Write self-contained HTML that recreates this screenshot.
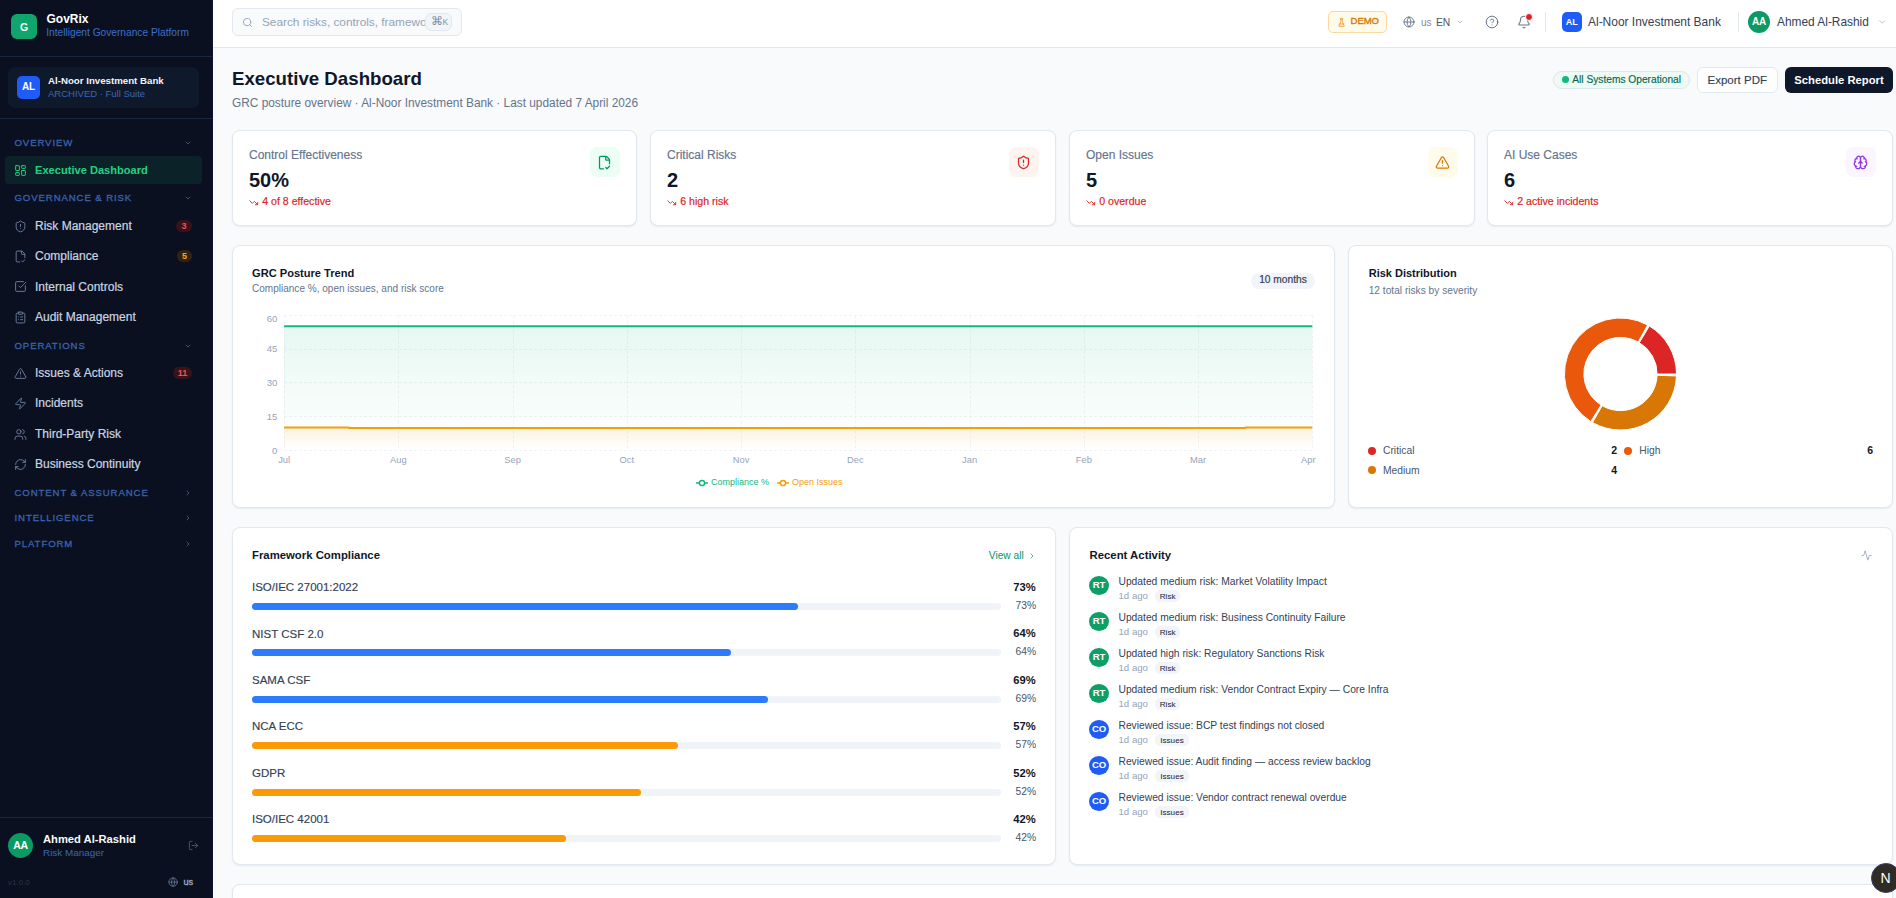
<!DOCTYPE html><html><head><meta charset="utf-8"><style>
*{box-sizing:border-box;margin:0;padding:0}
html,body{width:1896px;height:898px;overflow:hidden;background:#f8fafc;font-family:"Liberation Sans",sans-serif;color:#0f172a}
.a{position:absolute}
.t{position:absolute;white-space:nowrap;line-height:0}
svg{display:block}
.ic{fill:none;stroke:currentColor;stroke-linecap:round;stroke-linejoin:round}
.card{position:absolute;background:#fff;border:1px solid #e2e8f0;border-radius:8px;box-shadow:0 1px 2px rgba(15,23,42,.07)}
.pill{position:absolute;display:flex;align-items:center;justify-content:center;white-space:nowrap}
</style></head><body><div class="a" style="left:0;top:0;width:213px;height:898px;background:#0a1020;border-right:1px solid #0c1630"></div>
<div class="pill" style="left:11px;top:13.5px;width:26px;height:25.5px;border-radius:6px;background:#10a56d;color:#fff;font-size:10.5px;font-weight:700;padding-top:1.5px">G</div>
<div class="t" style="left:46.5px;top:19px;font-size:12px;color:#ffffff;font-weight:700;">GovRix</div>
<div class="t" style="left:46.2px;top:33px;font-size:10.2px;color:#3f6fc9;font-weight:400;">Intelligent Governance Platform</div>
<div class="a" style="left:0;top:56px;width:212px;height:1px;background:#1a2743"></div>
<div class="a" style="left:8px;top:67px;width:191px;height:41px;border-radius:7px;background:#0e192c"></div>
<div class="pill" style="left:17px;top:76px;width:23px;height:23px;border-radius:5px;background:#1f5cf7;color:#fff;font-size:10px;font-weight:700;padding-bottom:1.5px;letter-spacing:-0.2px">AL</div>
<div class="t" style="left:48px;top:81px;font-size:9.7px;color:#f1f5f9;font-weight:700;">Al-Noor Investment Bank</div>
<div class="t" style="left:48px;top:94px;font-size:9.5px;color:#3f66b0;font-weight:400;">ARCHIVED · Full Suite</div>
<div class="a" style="left:0;top:118px;width:212px;height:1px;background:#1a2743"></div>
<div class="t" style="left:14.5px;top:143px;font-size:9.6px;font-weight:400;letter-spacing:0.9px;color:#3b63ad;-webkit-text-stroke:0.3px #3b63ad">OVERVIEW</div>
<div class="a" style="left:183.8px;top:138.9px;width:8px;height:8px"><svg width="8" height="8" viewBox="0 0 24 24" class="ic" style="color:#56688c;stroke-width:2.2" ><path d="m6 9 6 6 6-6"/></svg></div>
<div class="a" style="left:5px;top:156px;width:197px;height:28px;border-radius:4px;background:#0b2328"></div>
<div class="a" style="left:14.0px;top:164.0px;width:13px;height:13px"><svg width="13" height="13" viewBox="0 0 24 24" class="ic" style="color:#24d183;stroke-width:1.8" ><rect width="7" height="9" x="3" y="3" rx="1"/><rect width="7" height="5" x="14" y="3" rx="1"/><rect width="7" height="9" x="14" y="12" rx="1"/><rect width="7" height="5" x="3" y="16" rx="1"/></svg></div>
<div class="t" style="left:35px;top:170px;font-size:11.1px;color:#24d183;font-weight:700;">Executive Dashboard</div>
<div class="t" style="left:14.5px;top:198px;font-size:9.6px;font-weight:400;letter-spacing:0.9px;color:#3b63ad;-webkit-text-stroke:0.3px #3b63ad">GOVERNANCE &amp; RISK</div>
<div class="a" style="left:183.8px;top:193.9px;width:8px;height:8px"><svg width="8" height="8" viewBox="0 0 24 24" class="ic" style="color:#56688c;stroke-width:2.2" ><path d="m6 9 6 6 6-6"/></svg></div>
<div class="a" style="left:14.0px;top:219.7px;width:13px;height:13px"><svg width="13" height="13" viewBox="0 0 24 24" class="ic" style="color:#7688a8;stroke-width:1.6" ><path d="M20 13c0 5-3.5 7.5-7.66 8.95a1 1 0 0 1-.67-.01C7.5 20.5 4 18 4 13V6a1 1 0 0 1 1-1c2 0 4.5-1.2 6.24-2.72a1.17 1.17 0 0 1 1.52 0C14.51 3.81 17 5 19 5a1 1 0 0 1 1 1z"/><path d="M12 8v4"/><path d="M12 16h.01"/></svg></div>
<div class="t" style="left:35px;top:226px;font-size:12px;color:#cbd5e1;font-weight:400;-webkit-text-stroke:0.2px #cbd5e1">Risk Management</div>
<div class="pill" style="left:176px;top:220.2px;width:16px;height:12px;border-radius:6px;background:#3a1219;color:#f05252;font-size:9px;font-weight:700">3</div>
<div class="a" style="left:14.0px;top:249.5px;width:13px;height:13px"><svg width="13" height="13" viewBox="0 0 24 24" class="ic" style="color:#7688a8;stroke-width:1.6" ><path d="M10.5 22H6a2 2 0 0 1-2-2V4a2 2 0 0 1 2-2h8a2.4 2.4 0 0 1 1.706.706l3.588 3.588A2.4 2.4 0 0 1 20 8v6"/><path d="M14 2v5a1 1 0 0 0 1 1h5"/><path d="m14 20 2 2 4-4"/></svg></div>
<div class="t" style="left:35px;top:256px;font-size:12px;color:#cbd5e1;font-weight:400;-webkit-text-stroke:0.2px #cbd5e1">Compliance</div>
<div class="pill" style="left:177px;top:250px;width:15px;height:12px;border-radius:6px;background:#33220f;color:#f5a524;font-size:9px;font-weight:700">5</div>
<div class="a" style="left:14.0px;top:280.4px;width:13px;height:13px"><svg width="13" height="13" viewBox="0 0 24 24" class="ic" style="color:#7688a8;stroke-width:1.6" ><path d="M21 10.5V19a2 2 0 0 1-2 2H5a2 2 0 0 1-2-2V5a2 2 0 0 1 2-2h12.5"/><path d="m9 11 3 3L22 4"/></svg></div>
<div class="t" style="left:35px;top:287px;font-size:12px;color:#cbd5e1;font-weight:400;-webkit-text-stroke:0.2px #cbd5e1">Internal Controls</div>
<div class="a" style="left:14.0px;top:310.6px;width:13px;height:13px"><svg width="13" height="13" viewBox="0 0 24 24" class="ic" style="color:#7688a8;stroke-width:1.6" ><rect width="8" height="4" x="8" y="2" rx="1" ry="1"/><path d="M16 4h2a2 2 0 0 1 2 2v14a2 2 0 0 1-2 2H6a2 2 0 0 1-2-2V6a2 2 0 0 1 2-2h2"/><path d="M12 11h4"/><path d="M12 16h4"/><path d="M8 11h.01"/><path d="M8 16h.01"/></svg></div>
<div class="t" style="left:35px;top:317px;font-size:12px;color:#cbd5e1;font-weight:400;-webkit-text-stroke:0.2px #cbd5e1">Audit Management</div>
<div class="t" style="left:14.5px;top:346px;font-size:9.6px;font-weight:400;letter-spacing:0.9px;color:#3b63ad;-webkit-text-stroke:0.3px #3b63ad">OPERATIONS</div>
<div class="a" style="left:183.8px;top:342.1px;width:8px;height:8px"><svg width="8" height="8" viewBox="0 0 24 24" class="ic" style="color:#56688c;stroke-width:2.2" ><path d="m6 9 6 6 6-6"/></svg></div>
<div class="a" style="left:14.0px;top:366.5px;width:13px;height:13px"><svg width="13" height="13" viewBox="0 0 24 24" class="ic" style="color:#7688a8;stroke-width:1.6" ><path d="m21.73 18-8-14a2 2 0 0 0-3.48 0l-8 14A2 2 0 0 0 4 21h16a2 2 0 0 0 1.73-3"/><path d="M12 9v4"/><path d="M12 17h.01"/></svg></div>
<div class="t" style="left:35px;top:373px;font-size:12px;color:#cbd5e1;font-weight:400;-webkit-text-stroke:0.2px #cbd5e1">Issues &amp; Actions</div>
<div class="pill" style="left:173px;top:367px;width:19px;height:12px;border-radius:6px;background:#3a1219;color:#f05252;font-size:9px;font-weight:700">11</div>
<div class="a" style="left:14.0px;top:396.7px;width:13px;height:13px"><svg width="13" height="13" viewBox="0 0 24 24" class="ic" style="color:#7688a8;stroke-width:1.6" ><path d="M4 14a1 1 0 0 1-.78-1.63l9.9-10.2a.5.5 0 0 1 .86.46l-1.92 6.02A1 1 0 0 0 13 10h7a1 1 0 0 1 .78 1.63l-9.9 10.2a.5.5 0 0 1-.86-.46l1.92-6.02A1 1 0 0 0 11 14z"/></svg></div>
<div class="t" style="left:35px;top:403px;font-size:12px;color:#cbd5e1;font-weight:400;-webkit-text-stroke:0.2px #cbd5e1">Incidents</div>
<div class="a" style="left:14.0px;top:427.5px;width:13px;height:13px"><svg width="13" height="13" viewBox="0 0 24 24" class="ic" style="color:#7688a8;stroke-width:1.6" ><path d="M16 21v-2a4 4 0 0 0-4-4H6a4 4 0 0 0-4 4v2"/><circle cx="9" cy="7" r="4"/><path d="M22 21v-2a4 4 0 0 0-3-3.87"/><path d="M16 3.13a4 4 0 0 1 0 7.75"/></svg></div>
<div class="t" style="left:35px;top:434px;font-size:12px;color:#cbd5e1;font-weight:400;-webkit-text-stroke:0.2px #cbd5e1">Third-Party Risk</div>
<div class="a" style="left:14.0px;top:457.5px;width:13px;height:13px"><svg width="13" height="13" viewBox="0 0 24 24" class="ic" style="color:#7688a8;stroke-width:1.6" ><path d="M3 12a9 9 0 0 1 9-9 9.75 9.75 0 0 1 6.74 2.74L21 8"/><path d="M21 3v5h-5"/><path d="M21 12a9 9 0 0 1-9 9 9.75 9.75 0 0 1-6.74-2.74L3 16"/><path d="M8 16H3v5"/></svg></div>
<div class="t" style="left:35px;top:464px;font-size:12px;color:#cbd5e1;font-weight:400;-webkit-text-stroke:0.2px #cbd5e1">Business Continuity</div>
<div class="t" style="left:14.5px;top:493px;font-size:9.6px;font-weight:400;letter-spacing:0.9px;color:#3b63ad;-webkit-text-stroke:0.3px #3b63ad">CONTENT &amp; ASSURANCE</div>
<div class="a" style="left:183.8px;top:488.90000000000003px;width:8px;height:8px"><svg width="8" height="8" viewBox="0 0 24 24" class="ic" style="color:#56688c;stroke-width:2.2" ><path d="m9 18 6-6-6-6"/></svg></div>
<div class="t" style="left:14.5px;top:518px;font-size:9.6px;font-weight:400;letter-spacing:0.9px;color:#3b63ad;-webkit-text-stroke:0.3px #3b63ad">INTELLIGENCE</div>
<div class="a" style="left:183.8px;top:514.1px;width:8px;height:8px"><svg width="8" height="8" viewBox="0 0 24 24" class="ic" style="color:#56688c;stroke-width:2.2" ><path d="m9 18 6-6-6-6"/></svg></div>
<div class="t" style="left:14.5px;top:544px;font-size:9.6px;font-weight:400;letter-spacing:0.9px;color:#3b63ad;-webkit-text-stroke:0.3px #3b63ad">PLATFORM</div>
<div class="a" style="left:183.8px;top:539.9px;width:8px;height:8px"><svg width="8" height="8" viewBox="0 0 24 24" class="ic" style="color:#56688c;stroke-width:2.2" ><path d="m9 18 6-6-6-6"/></svg></div>
<div class="a" style="left:0;top:817px;width:212px;height:1px;background:#1a2743"></div>
<div class="pill" style="left:8px;top:833px;width:25px;height:25px;border-radius:50%;background:#0b9a63;color:#fff;font-size:10.5px;font-weight:700;letter-spacing:-0.3px;padding-bottom:1px">AA</div>
<div class="t" style="left:43px;top:839px;font-size:11.2px;color:#f8fafc;font-weight:700;">Ahmed Al-Rashid</div>
<div class="t" style="left:43px;top:853px;font-size:9.9px;color:#3f66b0;font-weight:400;">Risk Manager</div>
<div class="a" style="left:187.7px;top:840.1px;width:11px;height:11px"><svg width="11" height="11" viewBox="0 0 24 24" class="ic" style="color:#55627a;stroke-width:1.8" ><path d="M9 21H5a2 2 0 0 1-2-2V5a2 2 0 0 1 2-2h4"/><polyline points="16 17 21 12 16 7"/><line x1="21" x2="9" y1="12" y2="12"/></svg></div>
<div class="t" style="left:8px;top:883px;font-size:8px;color:#2a3448;font-weight:400;">v1.0.0</div>
<div class="a" style="left:167.9px;top:876.9px;width:10.2px;height:10.2px"><svg width="10.2" height="10.2" viewBox="0 0 24 24" class="ic" style="color:#6b7a95;stroke-width:1.8" ><circle cx="12" cy="12" r="10"/><path d="M12 2a14.5 14.5 0 0 0 0 20 14.5 14.5 0 0 0 0-20"/><path d="M2 12h20"/></svg></div>
<div class="t" style="left:183.5px;top:882px;font-size:9.2px;color:#9aa8c0;font-weight:400;-webkit-text-stroke:0.35px #9aa8c0">us</div>
<div class="a" style="left:213px;top:0;width:1683px;height:48px;background:#fff;border-bottom:1px solid #e2e8f0"></div>
<div class="a" style="left:232px;top:8px;width:230px;height:28px;border-radius:6px;background:#f8fafc;border:1px solid #e2e8f0"></div>
<div class="a" style="left:241.5px;top:16.5px;width:11px;height:11px"><svg width="11" height="11" viewBox="0 0 24 24" class="ic" style="color:#94a3b8;stroke-width:2" ><circle cx="11" cy="11" r="8"/><path d="m21 21-4.3-4.3"/></svg></div>
<div class="a" style="left:262px;top:8px;width:164px;height:28px;overflow:hidden"><div class="t" style="left:0px;top:14px;font-size:11.8px;color:#94a3b8;font-weight:400;">Search risks, controls, frameworks...</div></div>
<div class="pill" style="left:425.3px;top:13.1px;width:27.1px;height:17.5px;border-radius:6px;background:#f1f5f9;border:1px solid #e2e8f0;color:#8190a5;font-size:9px;padding-left:1px"><span style="font-size:11.5px;line-height:1">&#8984;</span><span style="font-size:8.5px;margin-top:1px">K</span></div>
<div class="pill" style="left:1328px;top:11px;width:59px;height:22px;border-radius:5px;background:#fffbeb;border:1px solid #fcd9a3;color:#d97706;font-size:9.6px;font-weight:400;-webkit-text-stroke:0.35px #d97706;letter-spacing:-0.1px;padding-left:14.5px;padding-bottom:3.5px">DEMO</div>
<div class="a" style="left:1337.0px;top:17.5px;width:9px;height:9px"><svg width="9" height="9" viewBox="0 0 24 24" class="ic" style="color:#e58a1c;stroke-width:2" ><path d="M10 2v7.527a2 2 0 0 1-.211.896L4.72 20.55a1 1 0 0 0 .9 1.45h12.76a1 1 0 0 0 .9-1.45l-5.069-10.127A2 2 0 0 1 14 9.527V2"/><path d="M8.5 2h7"/><path d="M7 16h10"/></svg></div>
<div class="a" style="left:1403.0px;top:16.0px;width:12px;height:12px"><svg width="12" height="12" viewBox="0 0 24 24" class="ic" style="color:#64748b;stroke-width:1.8" ><circle cx="12" cy="12" r="10"/><path d="M12 2a14.5 14.5 0 0 0 0 20 14.5 14.5 0 0 0 0-20"/><path d="M2 12h20"/></svg></div>
<div class="t" style="left:1421px;top:23px;font-size:10px;color:#7b8aa0;font-weight:400;">us</div>
<div class="t" style="left:1436px;top:23px;font-size:10.3px;color:#475569;font-weight:400;">EN</div>
<div class="a" style="left:1456.0px;top:18.0px;width:8px;height:8px"><svg width="8" height="8" viewBox="0 0 24 24" class="ic" style="color:#94a3b8;stroke-width:2" ><path d="m6 9 6 6 6-6"/></svg></div>
<div class="a" style="left:1484.8px;top:15.0px;width:14px;height:14px"><svg width="14" height="14" viewBox="0 0 24 24" class="ic" style="color:#64748b;stroke-width:1.7" ><circle cx="12" cy="12" r="10"/><path d="M9.09 9a3 3 0 0 1 5.83 1c0 2-3 3-3 3"/><path d="M12 17h.01"/></svg></div>
<div class="a" style="left:1517.0px;top:15.0px;width:14px;height:14px"><svg width="14" height="14" viewBox="0 0 24 24" class="ic" style="color:#64748b;stroke-width:1.8" ><path d="M10.268 21a2 2 0 0 0 3.464 0"/><path d="M3.262 15.326A1 1 0 0 0 4 17h16a1 1 0 0 0 .74-1.673C19.41 13.956 18 12.499 18 8A6 6 0 0 0 6 8c0 4.499-1.411 5.956-2.738 7.326"/></svg></div>
<div class="a" style="left:1524.6px;top:12.6px;width:8.8px;height:8.8px;border-radius:50%;background:#e11d28;border:1.5px solid #fff;box-sizing:border-box"></div>
<div class="a" style="left:1545px;top:12px;width:1px;height:20px;background:#e2e8f0"></div>
<div class="pill" style="left:1562px;top:12px;width:19.5px;height:20px;border-radius:5px;background:#1f5cf7;color:#fff;font-size:9px;font-weight:700">AL</div>
<div class="t" style="left:1588px;top:22px;font-size:11.96px;color:#334155;font-weight:400;">Al-Noor Investment Bank</div>
<div class="a" style="left:1738px;top:12px;width:1px;height:20px;background:#e2e8f0"></div>
<div class="pill" style="left:1748px;top:11px;width:22px;height:22px;border-radius:50%;background:#0b9a63;color:#fff;font-size:10px;font-weight:700;letter-spacing:-0.3px;padding-bottom:1px">AA</div>
<div class="t" style="left:1777px;top:22px;font-size:11.9px;color:#334155;font-weight:400;">Ahmed Al-Rashid</div>
<div class="a" style="left:1876.5px;top:17.0px;width:10px;height:10px"><svg width="10" height="10" viewBox="0 0 24 24" class="ic" style="color:#a3b0c2;stroke-width:1.8" ><path d="m6 9 6 6 6-6"/></svg></div>
<div class="t" style="left:232px;top:79px;font-size:18.68px;color:#0f172a;font-weight:700;">Executive Dashboard</div>
<div class="t" style="left:232px;top:103px;font-size:11.86px;color:#64748b;font-weight:400;">GRC posture overview · Al-Noor Investment Bank · Last updated 7 April 2026</div>
<div class="a" style="left:1553px;top:71px;width:137px;height:18px;border-radius:9px;background:#edfbf4;border:1px solid #dfe5ee"></div>
<div class="a" style="left:1562px;top:75.8px;width:7px;height:7px;border-radius:50%;background:#10b981"></div>
<div class="t" style="left:1572.3px;top:80px;font-size:10.2px;color:#06664d;font-weight:400;-webkit-text-stroke:0.15px #06664d">All Systems Operational</div>
<div class="pill" style="left:1697px;top:67px;width:80.5px;height:25.5px;border-radius:6px;background:#fff;border:1px solid #e2e8f0;color:#334155;font-size:11.5px;-webkit-text-stroke:0.15px #334155">Export PDF</div>
<div class="pill" style="left:1785px;top:67px;width:108px;height:25.5px;border-radius:6px;background:#0f172a;color:#fff;font-size:11.25px;font-weight:700">Schedule Report</div>
<div class="card" style="left:232px;top:130px;width:405px;height:96px"></div>
<div class="t" style="left:249px;top:155px;font-size:12px;color:#64748b;font-weight:400;-webkit-text-stroke:0.15px #64748b">Control Effectiveness</div>
<div class="t" style="left:249px;top:180px;font-size:20px;color:#0f172a;font-weight:700;">50%</div>
<div class="a" style="left:249.05px;top:198.05px;width:9.5px;height:9.5px"><svg width="9.5" height="9.5" viewBox="0 0 24 24" class="ic" style="color:#dc2626;stroke-width:2.3" ><path d="M16 17h6v-6"/><path d="m22 17-8.5-8.5-5 5L2 7"/></svg></div>
<div class="t" style="left:262.2px;top:201px;font-size:10.6px;color:#dc2626;font-weight:400;-webkit-text-stroke:0.2px #dc2626">4 of 8 effective</div>
<div class="a" style="left:589.5px;top:147px;width:30px;height:30px;border-radius:7px;background:#ecfdf5"></div>
<div class="a" style="left:597.2px;top:154.5px;width:15px;height:15px"><svg width="15" height="15" viewBox="0 0 24 24" class="ic" style="color:#059669;stroke-width:2" ><path d="M10.5 22H6a2 2 0 0 1-2-2V4a2 2 0 0 1 2-2h8a2.4 2.4 0 0 1 1.706.706l3.588 3.588A2.4 2.4 0 0 1 20 8v6"/><path d="M14 2v5a1 1 0 0 0 1 1h5"/><path d="m14 20 2 2 4-4"/></svg></div>
<div class="card" style="left:650px;top:130px;width:406px;height:96px"></div>
<div class="t" style="left:667px;top:155px;font-size:12px;color:#64748b;font-weight:400;-webkit-text-stroke:0.15px #64748b">Critical Risks</div>
<div class="t" style="left:667px;top:180px;font-size:20px;color:#0f172a;font-weight:700;">2</div>
<div class="a" style="left:667.05px;top:198.05px;width:9.5px;height:9.5px"><svg width="9.5" height="9.5" viewBox="0 0 24 24" class="ic" style="color:#dc2626;stroke-width:2.3" ><path d="M16 17h6v-6"/><path d="m22 17-8.5-8.5-5 5L2 7"/></svg></div>
<div class="t" style="left:680.2px;top:201px;font-size:10.6px;color:#dc2626;font-weight:400;-webkit-text-stroke:0.2px #dc2626">6 high risk</div>
<div class="a" style="left:1008.5px;top:147px;width:30px;height:30px;border-radius:7px;background:#fdf4f0"></div>
<div class="a" style="left:1016.2px;top:154.5px;width:15px;height:15px"><svg width="15" height="15" viewBox="0 0 24 24" class="ic" style="color:#dc2626;stroke-width:2" ><path d="M20 13c0 5-3.5 7.5-7.66 8.95a1 1 0 0 1-.67-.01C7.5 20.5 4 18 4 13V6a1 1 0 0 1 1-1c2 0 4.5-1.2 6.24-2.72a1.17 1.17 0 0 1 1.52 0C14.51 3.81 17 5 19 5a1 1 0 0 1 1 1z"/><path d="M12 8v4"/><path d="M12 16h.01"/></svg></div>
<div class="card" style="left:1069px;top:130px;width:406px;height:96px"></div>
<div class="t" style="left:1086px;top:155px;font-size:12px;color:#64748b;font-weight:400;-webkit-text-stroke:0.15px #64748b">Open Issues</div>
<div class="t" style="left:1086px;top:180px;font-size:20px;color:#0f172a;font-weight:700;">5</div>
<div class="a" style="left:1086.05px;top:198.05px;width:9.5px;height:9.5px"><svg width="9.5" height="9.5" viewBox="0 0 24 24" class="ic" style="color:#dc2626;stroke-width:2.3" ><path d="M16 17h6v-6"/><path d="m22 17-8.5-8.5-5 5L2 7"/></svg></div>
<div class="t" style="left:1099.2px;top:201px;font-size:10.6px;color:#dc2626;font-weight:400;-webkit-text-stroke:0.2px #dc2626">0 overdue</div>
<div class="a" style="left:1427.5px;top:147px;width:30px;height:30px;border-radius:7px;background:#fffbeb"></div>
<div class="a" style="left:1435.2px;top:154.5px;width:15px;height:15px"><svg width="15" height="15" viewBox="0 0 24 24" class="ic" style="color:#d97706;stroke-width:2" ><path d="m21.73 18-8-14a2 2 0 0 0-3.48 0l-8 14A2 2 0 0 0 4 21h16a2 2 0 0 0 1.73-3"/><path d="M12 9v4"/><path d="M12 17h.01"/></svg></div>
<div class="card" style="left:1487px;top:130px;width:406px;height:96px"></div>
<div class="t" style="left:1504px;top:155px;font-size:12px;color:#64748b;font-weight:400;-webkit-text-stroke:0.15px #64748b">AI Use Cases</div>
<div class="t" style="left:1504px;top:180px;font-size:20px;color:#0f172a;font-weight:700;">6</div>
<div class="a" style="left:1504.05px;top:198.05px;width:9.5px;height:9.5px"><svg width="9.5" height="9.5" viewBox="0 0 24 24" class="ic" style="color:#dc2626;stroke-width:2.3" ><path d="M16 17h6v-6"/><path d="m22 17-8.5-8.5-5 5L2 7"/></svg></div>
<div class="t" style="left:1517.2px;top:201px;font-size:10.6px;color:#dc2626;font-weight:400;-webkit-text-stroke:0.2px #dc2626">2 active incidents</div>
<div class="a" style="left:1845.5px;top:147px;width:30px;height:30px;border-radius:7px;background:#faf5ff"></div>
<div class="a" style="left:1853.2px;top:154.5px;width:15px;height:15px"><svg width="15" height="15" viewBox="0 0 24 24" class="ic" style="color:#9333ea;stroke-width:2" ><path d="M12 5a3 3 0 1 0-5.997.125 4 4 0 0 0-2.526 5.77 4 4 0 0 0 .556 6.588A4 4 0 1 0 12 18Z"/><path d="M12 5a3 3 0 1 1 5.997.125 4 4 0 0 1 2.526 5.77 4 4 0 0 1-.556 6.588A4 4 0 1 1 12 18Z"/><path d="M15 13a4.5 4.5 0 0 1-3-4 4.5 4.5 0 0 1-3 4"/><path d="M17.599 6.5a3 3 0 0 0 .399-1.375"/><path d="M6.003 5.125A3 3 0 0 0 6.401 6.5"/><path d="M3.477 10.896a4 4 0 0 1 .585-.396"/><path d="M19.938 10.5a4 4 0 0 1 .585.396"/><path d="M6 18a4 4 0 0 1-1.967-.516"/><path d="M19.967 17.484A4 4 0 0 1 18 18"/></svg></div>
<div class="card" style="left:232px;top:245px;width:1103px;height:263px"></div>
<div class="t" style="left:252px;top:273px;font-size:11.1px;color:#0f172a;font-weight:700;">GRC Posture Trend</div>
<div class="t" style="left:252px;top:289px;font-size:10.04px;color:#64748b;font-weight:400;">Compliance %, open issues, and risk score</div>
<div class="pill" style="left:1251px;top:273px;width:64px;height:16px;border-radius:8px;background:#f1f5f9;color:#334155;font-size:10.2px;padding-bottom:2.5px;-webkit-text-stroke:0.2px #334155">10 months</div>
<svg class="a" style="left:0;top:0" width="1896" height="898"><defs><linearGradient id="gG" x1="0" y1="0" x2="0" y2="1"><stop offset="0%" stop-color="#10b981" stop-opacity="0.105"/><stop offset="95%" stop-color="#10b981" stop-opacity="0"/></linearGradient><linearGradient id="gO" x1="0" y1="0" x2="0" y2="1"><stop offset="0%" stop-color="#f59e0b" stop-opacity="0.12"/><stop offset="95%" stop-color="#f59e0b" stop-opacity="0"/></linearGradient></defs><line x1="284.1" x2="1312.3" y1="315.5" y2="315.5" stroke="#f0f3f6" stroke-dasharray="3 2"/><line x1="284.1" x2="1312.3" y1="349.5" y2="349.5" stroke="#f0f3f6" stroke-dasharray="3 2"/><line x1="284.1" x2="1312.3" y1="382.5" y2="382.5" stroke="#f0f3f6" stroke-dasharray="3 2"/><line x1="284.1" x2="1312.3" y1="416.5" y2="416.5" stroke="#f0f3f6" stroke-dasharray="3 2"/><line x1="284.1" x2="1312.3" y1="450.5" y2="450.5" stroke="#f0f3f6" stroke-dasharray="3 2"/><line x1="284.5" x2="284.5" y1="315.5" y2="450.5" stroke="#f1f3f6" stroke-dasharray="3 2"/><line x1="398.5" x2="398.5" y1="315.5" y2="450.5" stroke="#f1f3f6" stroke-dasharray="3 2"/><line x1="513.5" x2="513.5" y1="315.5" y2="450.5" stroke="#f1f3f6" stroke-dasharray="3 2"/><line x1="627.5" x2="627.5" y1="315.5" y2="450.5" stroke="#f1f3f6" stroke-dasharray="3 2"/><line x1="741.5" x2="741.5" y1="315.5" y2="450.5" stroke="#f1f3f6" stroke-dasharray="3 2"/><line x1="855.5" x2="855.5" y1="315.5" y2="450.5" stroke="#f1f3f6" stroke-dasharray="3 2"/><line x1="970.5" x2="970.5" y1="315.5" y2="450.5" stroke="#f1f3f6" stroke-dasharray="3 2"/><line x1="1084.5" x2="1084.5" y1="315.5" y2="450.5" stroke="#f1f3f6" stroke-dasharray="3 2"/><line x1="1198.5" x2="1198.5" y1="315.5" y2="450.5" stroke="#f1f3f6" stroke-dasharray="3 2"/><line x1="1312.5" x2="1312.5" y1="315.5" y2="450.5" stroke="#f1f3f6" stroke-dasharray="3 2"/><path d="M284.1 326.2H1312.3V450.5H284.1Z" fill="url(#gG)"/><path d="M284.1 428H1312.3V450.5H284.1Z" fill="url(#gO)"/><path d="M284.1 326.2H1312.3" stroke="#10b981" stroke-width="2" fill="none"/><path d="M284.1 427.5H348.5L349 428H1245L1245.5 427.5H1312.3" stroke="#f59e0b" stroke-width="2" fill="none"/></svg>
<div class="t" style="right:1618.8px;top:319px;font-size:9.5px;color:#94a3b8;font-weight:400;text-align:right;">60</div>
<div class="t" style="right:1618.8px;top:349px;font-size:9.5px;color:#94a3b8;font-weight:400;text-align:right;">45</div>
<div class="t" style="right:1618.8px;top:383px;font-size:9.5px;color:#94a3b8;font-weight:400;text-align:right;">30</div>
<div class="t" style="right:1618.8px;top:417px;font-size:9.5px;color:#94a3b8;font-weight:400;text-align:right;">15</div>
<div class="t" style="right:1618.8px;top:451px;font-size:9.5px;color:#94a3b8;font-weight:400;text-align:right;">0</div>
<div class="t" style="left:184.10000000000002px;width:200px;text-align:center;top:460px;font-size:9.3px;color:#94a3b8;font-weight:400;">Jul</div>
<div class="t" style="left:298.34444444444443px;width:200px;text-align:center;top:460px;font-size:9.3px;color:#94a3b8;font-weight:400;">Aug</div>
<div class="t" style="left:412.58888888888885px;width:200px;text-align:center;top:460px;font-size:9.3px;color:#94a3b8;font-weight:400;">Sep</div>
<div class="t" style="left:526.8333333333333px;width:200px;text-align:center;top:460px;font-size:9.3px;color:#94a3b8;font-weight:400;">Oct</div>
<div class="t" style="left:641.0777777777778px;width:200px;text-align:center;top:460px;font-size:9.3px;color:#94a3b8;font-weight:400;">Nov</div>
<div class="t" style="left:755.3222222222222px;width:200px;text-align:center;top:460px;font-size:9.3px;color:#94a3b8;font-weight:400;">Dec</div>
<div class="t" style="left:869.5666666666666px;width:200px;text-align:center;top:460px;font-size:9.3px;color:#94a3b8;font-weight:400;">Jan</div>
<div class="t" style="left:983.8111111111111px;width:200px;text-align:center;top:460px;font-size:9.3px;color:#94a3b8;font-weight:400;">Feb</div>
<div class="t" style="left:1098.0555555555554px;width:200px;text-align:center;top:460px;font-size:9.3px;color:#94a3b8;font-weight:400;">Mar</div>
<div class="t" style="left:1208.2999999999997px;width:200px;text-align:center;top:460px;font-size:9.3px;color:#94a3b8;font-weight:400;">Apr</div>
<svg class="a" style="left:695.5px;top:477.5px" width="12" height="10"><line x1="0" x2="12" y1="5" y2="5" stroke="#10b981" stroke-width="1.5"/><circle cx="6" cy="5" r="2.6" fill="#fff" stroke="#10b981" stroke-width="1.5"/></svg>
<div class="t" style="left:711.0px;top:482px;font-size:9px;color:#10b981;font-weight:400;">Compliance %</div>
<svg class="a" style="left:776.5px;top:477.5px" width="12" height="10"><line x1="0" x2="12" y1="5" y2="5" stroke="#f59e0b" stroke-width="1.5"/><circle cx="6" cy="5" r="2.6" fill="#fff" stroke="#f59e0b" stroke-width="1.5"/></svg>
<div class="t" style="left:792.0px;top:482px;font-size:9px;color:#f59e0b;font-weight:400;">Open Issues</div>
<div class="card" style="left:1348px;top:245px;width:545px;height:263px"></div>
<div class="t" style="left:1368.7px;top:273px;font-size:11px;color:#0f172a;font-weight:700;">Risk Distribution</div>
<div class="t" style="left:1368.7px;top:291px;font-size:10.19px;color:#64748b;font-weight:400;">12 total risks by severity</div>
<svg class="a" style="left:0;top:0" width="1896" height="898"><path d="M1676.50 374.00A56 56 0 0 0 1649.34 326.00L1639.35 342.63A36.6 36.6 0 0 1 1657.10 374.00Z" fill="#dc2626" stroke="#fff" stroke-width="1"/><path d="M1647.65 325.02A56 56 0 0 0 1590.82 421.49L1601.10 405.04A36.6 36.6 0 0 1 1638.24 341.99Z" fill="#ea580c" stroke="#fff" stroke-width="1"/><path d="M1592.50 422.50A56 56 0 0 0 1676.47 375.95L1657.08 375.28A36.6 36.6 0 0 1 1602.20 405.70Z" fill="#d97706" stroke="#fff" stroke-width="1"/></svg>
<div class="a" style="left:1368px;top:446.5px;width:8px;height:8px;border-radius:50%;background:#dc2626"></div>
<div class="t" style="left:1383px;top:451px;font-size:10.3px;color:#475569;font-weight:400;">Critical</div>
<div class="t" style="right:279px;top:450px;font-size:10.5px;color:#0f172a;font-weight:700;text-align:right;">2</div>
<div class="a" style="left:1624.3px;top:446.5px;width:8px;height:8px;border-radius:50%;background:#ea580c"></div>
<div class="t" style="left:1639.3px;top:451px;font-size:10.3px;color:#475569;font-weight:400;">High</div>
<div class="t" style="right:23px;top:450px;font-size:10.5px;color:#0f172a;font-weight:700;text-align:right;">6</div>
<div class="a" style="left:1368px;top:466.2px;width:8px;height:8px;border-radius:50%;background:#d97706"></div>
<div class="t" style="left:1383px;top:471px;font-size:10.3px;color:#475569;font-weight:400;">Medium</div>
<div class="t" style="right:279px;top:470px;font-size:10.5px;color:#0f172a;font-weight:700;text-align:right;">4</div>
<div class="card" style="left:232px;top:527px;width:824px;height:338px"></div>
<div class="t" style="left:252px;top:555px;font-size:11.35px;color:#0f172a;font-weight:700;">Framework Compliance</div>
<div class="t" style="left:988.8px;top:556px;font-size:10.2px;color:#059669;font-weight:400;">View all</div>
<div class="a" style="left:1027.5px;top:551.5px;width:8px;height:8px"><svg width="8" height="8" viewBox="0 0 24 24" class="ic" style="color:#059669;stroke-width:2.2" ><path d="m9 18 6-6-6-6"/></svg></div>
<div class="t" style="left:252px;top:587px;font-size:11.5px;color:#334155;font-weight:400;-webkit-text-stroke:0.15px #334155">ISO/IEC 27001:2022</div>
<div class="t" style="right:860.4000000000001px;top:587px;font-size:11.2px;color:#0f172a;font-weight:700;text-align:right;">73%</div>
<div class="a" style="left:252px;top:603.0px;width:748.6px;height:7px;border-radius:3.5px;background:#f0f3f7"></div>
<div class="a" style="left:252px;top:603.0px;width:546.0px;height:7px;border-radius:3.5px;background:#2b7bfa"></div>
<div class="t" style="right:859.8px;top:606px;font-size:10.3px;color:#475569;font-weight:400;text-align:right;">73%</div>
<div class="t" style="left:252px;top:634px;font-size:11.5px;color:#334155;font-weight:400;-webkit-text-stroke:0.15px #334155">NIST CSF 2.0</div>
<div class="t" style="right:860.4000000000001px;top:633px;font-size:11.2px;color:#0f172a;font-weight:700;text-align:right;">64%</div>
<div class="a" style="left:252px;top:649.4px;width:748.6px;height:7px;border-radius:3.5px;background:#f0f3f7"></div>
<div class="a" style="left:252px;top:649.4px;width:478.7px;height:7px;border-radius:3.5px;background:#2b7bfa"></div>
<div class="t" style="right:859.8px;top:652px;font-size:10.3px;color:#475569;font-weight:400;text-align:right;">64%</div>
<div class="t" style="left:252px;top:680px;font-size:11.5px;color:#334155;font-weight:400;-webkit-text-stroke:0.15px #334155">SAMA CSF</div>
<div class="t" style="right:860.4000000000001px;top:680px;font-size:11.2px;color:#0f172a;font-weight:700;text-align:right;">69%</div>
<div class="a" style="left:252px;top:695.8px;width:748.6px;height:7px;border-radius:3.5px;background:#f0f3f7"></div>
<div class="a" style="left:252px;top:695.8px;width:516.1px;height:7px;border-radius:3.5px;background:#2b7bfa"></div>
<div class="t" style="right:859.8px;top:699px;font-size:10.3px;color:#475569;font-weight:400;text-align:right;">69%</div>
<div class="t" style="left:252px;top:726px;font-size:11.5px;color:#334155;font-weight:400;-webkit-text-stroke:0.15px #334155">NCA ECC</div>
<div class="t" style="right:860.4000000000001px;top:726px;font-size:11.2px;color:#0f172a;font-weight:700;text-align:right;">57%</div>
<div class="a" style="left:252px;top:742.2px;width:748.6px;height:7px;border-radius:3.5px;background:#f0f3f7"></div>
<div class="a" style="left:252px;top:742.2px;width:426.4px;height:7px;border-radius:3.5px;background:#fb9a06"></div>
<div class="t" style="right:859.8px;top:745px;font-size:10.3px;color:#475569;font-weight:400;text-align:right;">57%</div>
<div class="t" style="left:252px;top:773px;font-size:11.5px;color:#334155;font-weight:400;-webkit-text-stroke:0.15px #334155">GDPR</div>
<div class="t" style="right:860.4000000000001px;top:773px;font-size:11.2px;color:#0f172a;font-weight:700;text-align:right;">52%</div>
<div class="a" style="left:252px;top:788.6px;width:748.6px;height:7px;border-radius:3.5px;background:#f0f3f7"></div>
<div class="a" style="left:252px;top:788.6px;width:389.0px;height:7px;border-radius:3.5px;background:#fb9a06"></div>
<div class="t" style="right:859.8px;top:792px;font-size:10.3px;color:#475569;font-weight:400;text-align:right;">52%</div>
<div class="t" style="left:252px;top:819px;font-size:11.5px;color:#334155;font-weight:400;-webkit-text-stroke:0.15px #334155">ISO/IEC 42001</div>
<div class="t" style="right:860.4000000000001px;top:819px;font-size:11.2px;color:#0f172a;font-weight:700;text-align:right;">42%</div>
<div class="a" style="left:252px;top:835.0px;width:748.6px;height:7px;border-radius:3.5px;background:#f0f3f7"></div>
<div class="a" style="left:252px;top:835.0px;width:314.2px;height:7px;border-radius:3.5px;background:#fb9a06"></div>
<div class="t" style="right:859.8px;top:838px;font-size:10.3px;color:#475569;font-weight:400;text-align:right;">42%</div>
<div class="card" style="left:1069px;top:527px;width:824px;height:338px"></div>
<div class="t" style="left:1089.5px;top:555px;font-size:11.37px;color:#0f172a;font-weight:700;">Recent Activity</div>
<div class="a" style="left:1860.5px;top:549.5px;width:11px;height:11px"><svg width="11" height="11" viewBox="0 0 24 24" class="ic" style="color:#94a3b8;stroke-width:1.8" ><path d="M22 12h-2.48a2 2 0 0 0-1.93 1.46l-2.35 8.36a.25.25 0 0 1-.48 0L9.24 2.18a.25.25 0 0 0-.48 0l-2.35 8.36A2 2 0 0 1 4.49 12H2"/></svg></div>
<div class="pill" style="left:1088.9px;top:575.6999999999999px;width:20.2px;height:19.4px;border-radius:50%;background:#0e9f67;color:#fff;font-size:9.6px;font-weight:700;letter-spacing:-0.2px;padding-bottom:2.5px">RT</div>
<div class="t" style="left:1118.5px;top:582px;font-size:10.28px;color:#334155;font-weight:400;">Updated medium risk: Market Volatility Impact</div>
<div class="t" style="left:1118.5px;top:596px;font-size:9.64px;color:#94a3b8;font-weight:400;">1d ago</div>
<div class="pill" style="left:1155.3px;top:590.4px;width:24.7px;height:11.3px;border-radius:5px;background:#f1f5f9;color:#1e293b;font-size:8.1px;padding-top:1px;-webkit-text-stroke:0.05px #1e293b">Risk</div>
<div class="pill" style="left:1088.9px;top:611.6999999999999px;width:20.2px;height:19.4px;border-radius:50%;background:#0e9f67;color:#fff;font-size:9.6px;font-weight:700;letter-spacing:-0.2px;padding-bottom:2.5px">RT</div>
<div class="t" style="left:1118.5px;top:618px;font-size:10.28px;color:#334155;font-weight:400;">Updated medium risk: Business Continuity Failure</div>
<div class="t" style="left:1118.5px;top:632px;font-size:9.64px;color:#94a3b8;font-weight:400;">1d ago</div>
<div class="pill" style="left:1155.3px;top:626.4px;width:24.7px;height:11.3px;border-radius:5px;background:#f1f5f9;color:#1e293b;font-size:8.1px;padding-top:1px;-webkit-text-stroke:0.05px #1e293b">Risk</div>
<div class="pill" style="left:1088.9px;top:647.6999999999999px;width:20.2px;height:19.4px;border-radius:50%;background:#0e9f67;color:#fff;font-size:9.6px;font-weight:700;letter-spacing:-0.2px;padding-bottom:2.5px">RT</div>
<div class="t" style="left:1118.5px;top:654px;font-size:10.28px;color:#334155;font-weight:400;">Updated high risk: Regulatory Sanctions Risk</div>
<div class="t" style="left:1118.5px;top:668px;font-size:9.64px;color:#94a3b8;font-weight:400;">1d ago</div>
<div class="pill" style="left:1155.3px;top:662.4px;width:24.7px;height:11.3px;border-radius:5px;background:#f1f5f9;color:#1e293b;font-size:8.1px;padding-top:1px;-webkit-text-stroke:0.05px #1e293b">Risk</div>
<div class="pill" style="left:1088.9px;top:683.6999999999999px;width:20.2px;height:19.4px;border-radius:50%;background:#0e9f67;color:#fff;font-size:9.6px;font-weight:700;letter-spacing:-0.2px;padding-bottom:2.5px">RT</div>
<div class="t" style="left:1118.5px;top:690px;font-size:10.28px;color:#334155;font-weight:400;">Updated medium risk: Vendor Contract Expiry — Core Infra</div>
<div class="t" style="left:1118.5px;top:704px;font-size:9.64px;color:#94a3b8;font-weight:400;">1d ago</div>
<div class="pill" style="left:1155.3px;top:698.4px;width:24.7px;height:11.3px;border-radius:5px;background:#f1f5f9;color:#1e293b;font-size:8.1px;padding-top:1px;-webkit-text-stroke:0.05px #1e293b">Risk</div>
<div class="pill" style="left:1088.9px;top:719.6999999999999px;width:20.2px;height:19.4px;border-radius:50%;background:#1f5cf7;color:#fff;font-size:9.6px;font-weight:700;letter-spacing:-0.2px;padding-bottom:2.5px">CO</div>
<div class="t" style="left:1118.5px;top:726px;font-size:10.28px;color:#334155;font-weight:400;">Reviewed issue: BCP test findings not closed</div>
<div class="t" style="left:1118.5px;top:740px;font-size:9.64px;color:#94a3b8;font-weight:400;">1d ago</div>
<div class="pill" style="left:1155.3px;top:734.4px;width:33.4px;height:11.3px;border-radius:5px;background:#f1f5f9;color:#1e293b;font-size:8.1px;padding-top:1px;-webkit-text-stroke:0.05px #1e293b">Issues</div>
<div class="pill" style="left:1088.9px;top:755.6999999999999px;width:20.2px;height:19.4px;border-radius:50%;background:#1f5cf7;color:#fff;font-size:9.6px;font-weight:700;letter-spacing:-0.2px;padding-bottom:2.5px">CO</div>
<div class="t" style="left:1118.5px;top:762px;font-size:10.28px;color:#334155;font-weight:400;">Reviewed issue: Audit finding — access review backlog</div>
<div class="t" style="left:1118.5px;top:776px;font-size:9.64px;color:#94a3b8;font-weight:400;">1d ago</div>
<div class="pill" style="left:1155.3px;top:770.4px;width:33.4px;height:11.3px;border-radius:5px;background:#f1f5f9;color:#1e293b;font-size:8.1px;padding-top:1px;-webkit-text-stroke:0.05px #1e293b">Issues</div>
<div class="pill" style="left:1088.9px;top:791.6999999999999px;width:20.2px;height:19.4px;border-radius:50%;background:#1f5cf7;color:#fff;font-size:9.6px;font-weight:700;letter-spacing:-0.2px;padding-bottom:2.5px">CO</div>
<div class="t" style="left:1118.5px;top:798px;font-size:10.28px;color:#334155;font-weight:400;">Reviewed issue: Vendor contract renewal overdue</div>
<div class="t" style="left:1118.5px;top:812px;font-size:9.64px;color:#94a3b8;font-weight:400;">1d ago</div>
<div class="pill" style="left:1155.3px;top:806.4px;width:33.4px;height:11.3px;border-radius:5px;background:#f1f5f9;color:#1e293b;font-size:8.1px;padding-top:1px;-webkit-text-stroke:0.05px #1e293b">Issues</div>
<div class="card" style="left:232px;top:884px;width:1661px;height:100px"></div>
<div class="pill" style="left:1870.5px;top:862.5px;width:30px;height:30px;border-radius:50%;background:#2f2b26;color:#fff;font-size:14px;border:1px solid #3a3f5a">N</div></body></html>
